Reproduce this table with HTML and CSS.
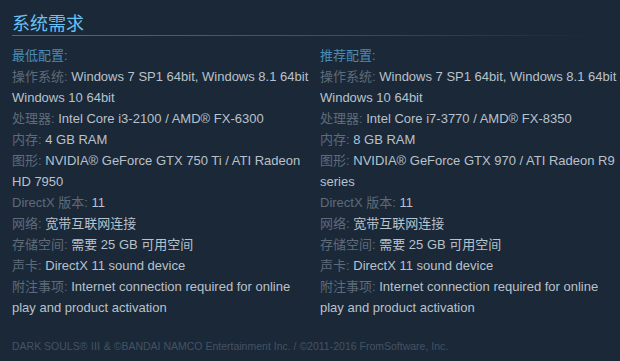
FILE: index.html
```html
<!DOCTYPE html>
<html lang="zh-CN">
<head>
<meta charset="utf-8">
<title>系统需求</title>
<link rel="stylesheet" href="styles.css">
</head>
<body>
<div class="page">
  <h2 class="title">系统需求</h2>
  <div class="cols">
    <div class="col">
      <div class="heading">最低配置:</div>
      <ul class="reqs">
        <li><span class="lbl">操作系统:</span> Windows 7 SP1 64bit, Windows 8.1 64bit<br>Windows 10 64bit</li>
        <li><span class="lbl">处理器:</span> Intel Core i3-2100 / AMD® FX-6300</li>
        <li><span class="lbl">内存:</span> 4 GB RAM</li>
        <li><span class="lbl">图形:</span> NVIDIA® GeForce GTX 750 Ti / ATI Radeon HD 7950</li>
        <li><span class="lbl">DirectX 版本:</span> 11</li>
        <li><span class="lbl">网络:</span> 宽带互联网连接</li>
        <li><span class="lbl">存储空间:</span> 需要 25 GB 可用空间</li>
        <li><span class="lbl">声卡:</span> DirectX 11 sound device</li>
        <li><span class="lbl">附注事项:</span> Internet connection required for online play and product activation</li>
      </ul>
    </div>
    <div class="col">
      <div class="heading">推荐配置:</div>
      <ul class="reqs">
        <li><span class="lbl">操作系统:</span> Windows 7 SP1 64bit, Windows 8.1 64bit<br>Windows 10 64bit</li>
        <li><span class="lbl">处理器:</span> Intel Core i7-3770 / AMD® FX-8350</li>
        <li><span class="lbl">内存:</span> 8 GB RAM</li>
        <li><span class="lbl">图形:</span> NVIDIA® GeForce GTX 970 / ATI Radeon R9 series</li>
        <li><span class="lbl">DirectX 版本:</span> 11</li>
        <li><span class="lbl">网络:</span> 宽带互联网连接</li>
        <li><span class="lbl">存储空间:</span> 需要 25 GB 可用空间</li>
        <li><span class="lbl">声卡:</span> DirectX 11 sound device</li>
        <li><span class="lbl">附注事项:</span> Internet connection required for online play and product activation</li>
      </ul>
    </div>
  </div>
  <p class="legal">DARK SOULS® Ⅲ &amp; ©BANDAI NAMCO Entertainment Inc. / ©2011-2016 FromSoftware, Inc.</p>
</div>
</body>
</html>
```
FILE: styles.css
```css
html, body {
  margin: 0;
  padding: 0;
  background: #1b2838;
}
body {
  font-family: "Liberation Sans", Arial, "Noto Sans CJK SC", sans-serif;
  font-size: 13px;
  color: #b8c2cb;
}
.page {
  width: 608px;
  padding: 13px 0 0 12px;
}
.title {
  margin: 0;
  font-weight: normal;
  font-size: 18px;
  line-height: 22px;
  color: #67c1f5;
  padding-bottom: 0;
  width: 580px;
  border-bottom: 1px solid transparent;
  border-image: linear-gradient(to right, #3b7193 0%, #2c5573 55%, #1b2838 100%) 1;
}
.cols {
  display: flex;
  gap: 8px;
  margin-top: 9px;
}
.col {
  width: 300px;
  flex: none;
}
.heading {
  color: #4a8cb5;
  font-size: 13px;
  line-height: 21px;
}
.reqs {
  list-style: none;
  margin: 0;
  padding: 0;
}
.reqs li {
  line-height: 21px;
  color: #b8c2cb;
}
.lbl {
  color: #5e6b78;
}
.legal {
  margin: 21px 0 0;
  font-size: 10.5px;
  line-height: 14px;
  color: #435364;
}
```
